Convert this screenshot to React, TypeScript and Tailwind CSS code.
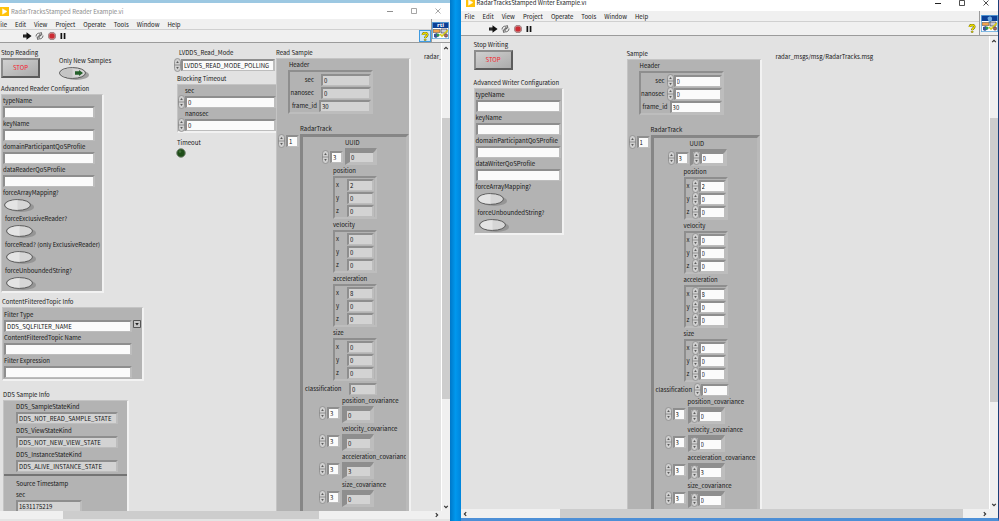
import { useState } from "react";
import type { ReactNode } from "react";
import clsx from "clsx";

type Vector = { name: string; values: [string, string, string] };

const VECTORS: Vector[] = [
  { name: "position", values: ["2", "0", "0"] },
  { name: "velocity", values: ["0", "0", "0"] },
  { name: "acceleration", values: ["8", "0", "0"] },
  { name: "size", values: ["0", "0", "0"] },
];

const COVARIANCES = [
  { name: "position_covariance", value: "0" },
  { name: "velocity_covariance", value: "0" },
  { name: "acceleration_covariance", value: "3" },
  { name: "size_covariance", value: "0" },
];

const MENU = ["File", "Edit", "View", "Project", "Operate", "Tools", "Window", "Help"];

const RAISED = "border-t-[#c4c4c4] border-l-[#c4c4c4] border-r-[#f2f2f2] border-b-[#f2f2f2]";
const SUNKEN = "border-t-[#8e8e8e] border-l-[#8e8e8e] border-r-[#bdbdbd] border-b-[#bdbdbd]";

function Spinner() {
  return (
    <svg viewBox="0 0 7 14" className="h-[14px] w-[7px] shrink-0" aria-hidden="true">
      <rect x="0.5" y="0.5" width="6" height="13" rx="3" fill="#cfcfcf" stroke="#8a8a8a" strokeWidth="0.8" />
      <path d="M0.5 7h6" stroke="#777" strokeWidth="0.7" />
      <path d="M2.2 5l1.3-2 1.3 2zM2.2 9l1.3 2 1.3-2z" fill="#5a5a5a" />
    </svg>
  );
}

type ValueProps = { label: string; value?: string; editable?: boolean; className?: string };

function Value({ label, value = "", editable = true, className }: ValueProps) {
  return (
    <input
      aria-label={label}
      defaultValue={value}
      readOnly={!editable}
      className={clsx(
        "min-w-0 border-2 border-b-1 pl-px text-[6px] leading-[8px] outline-none",
        SUNKEN,
        editable ? "bg-[#fbfbfb]" : "bg-[#d3d3d3]",
        className,
      )}
    />
  );
}

function Field({ label, value, editable, className }: ValueProps) {
  return (
    <label className="block">
      <span className="block">{label}</span>
      <Value label={label} value={value} editable={editable} className={clsx("block h-[12px]", className)} />
    </label>
  );
}

function Toggle({ label, lit, className }: { label: string; lit?: boolean; className?: string }) {
  return (
    <label className={clsx("block", className)}>
      <span className="block">{label}</span>
      <input type="checkbox" className="peer sr-only" />
      <svg viewBox="0 0 30 15" className={clsx("block h-[15px] w-[30px]", !lit && "ml-px")} aria-hidden="true">
        <ellipse cx="17" cy="9" rx="13" ry="5" fill="#8b8b8b" opacity="0.75" />
        <ellipse cx="13.5" cy="7" rx="13" ry="5.4" fill="#d6d6d6" stroke="#5a5a5a" />
        <path d="M13.5 2.2c-7 0-11.7 2.2-11.7 4.8s4.7 4.7 11.7 4.7z" fill={lit ? "#c4c4c4" : "#e4e4e4"} />
        {lit && <path d="M16 5.2h4V4l4 3-4 3V8.8h-4z" fill="#24602a" />}
      </svg>
    </label>
  );
}

function StopButton() {
  return (
    <button
      type="button"
      className="block h-[20px] w-[39px] border-2 border-t-[#8d8d8d] border-r-[#5c5c5c] border-b-[#5c5c5c] border-l-[#8d8d8d] bg-linear-to-br from-[#d0d0d0] to-[#ababab] text-[6px] leading-[14px] text-[#f5222d]"
    >
      STOP
    </button>
  );
}

function Cluster({ className, children }: { className?: string; children: ReactNode }) {
  return <div className={clsx("border bg-[#b3b3b3]", RAISED, className)}>{children}</div>;
}

function ArrayIndex({ label, value, className }: { label: string; value: string; className?: string }) {
  return (
    <div className={clsx("flex w-[21px] shrink-0 items-center gap-px", className)}>
      <Spinner />
      <Value label={`${label} index`} value={value} className="h-[12px] w-[13px]" />
    </div>
  );
}

function ArrayElement({ label, value, editable }: ValueProps) {
  return (
    <div
      className={clsx(
        "flex h-[17px] items-center border-[3px] border-r-2 border-b-2",
        SUNKEN,
        editable ? "w-[37px]" : "w-[32px]",
      )}
    >
      {editable && <Spinner />}
      <Value label={label} value={value} editable={editable} className="h-[12px] flex-1" />
    </div>
  );
}

function HeaderRow({ label, value, editable, stepped }: ValueProps & { stepped: boolean }) {
  return (
    <div className="flex h-[13px] items-center">
      <span className={clsx("text-right", stepped ? "w-[24px]" : "w-[27px]")}>{label}</span>
      <div className={clsx("flex min-w-0 flex-1 items-center", stepped ? (editable ? "pl-[2px]" : "pl-[7px]") : "pl-[2px]")}>
        {editable && stepped && <Spinner />}
        <Value label={label} value={value} editable={editable} className="h-[12px] flex-1" />
      </div>
    </div>
  );
}

function VectorCluster({ vector, editable }: { vector: Vector; editable: boolean }) {
  return (
    <div className="ml-[30px]">
      <span className="block">{vector.name}</span>
      <div className={clsx("w-[44px] border-2", SUNKEN)}>
        {["x", "y", "z"].map((axis, i) => (
          <div key={axis} className="flex h-[13px] items-center pl-px">
            <span className={editable ? "w-[5px]" : "w-[11px]"}>{axis}</span>
            {editable && <Spinner />}
            <Value
              label={`${vector.name} ${axis}`}
              value={vector.values[i]}
              editable={editable}
              className="h-[12px] w-[27px]"
            />
          </div>
        ))}
      </div>
    </div>
  );
}

// Stamped radar message, shown as controls in the writer and indicators in the reader
function RadarSample({ title, editable }: { title: string; editable: boolean }) {
  return (
    <section className="flex w-[135px] shrink-0 flex-col">
      <h2>{title}</h2>
      <Cluster className="flex min-h-0 flex-1 flex-col border-r-2 border-b-0">
        <span className="ml-[12px]">Header</span>
        <div className={clsx("ml-[11px] w-[85px] border-2 pt-px", SUNKEN)}>
          <HeaderRow label="sec" value="0" editable={editable} stepped />
          <HeaderRow label="nanosec" value="0" editable={editable} stepped />
          <HeaderRow label="frame_id" value="30" editable={editable} stepped={false} />
        </div>
        <span className="mt-[9px] ml-[23px]">RadarTrack</span>
        <div className="flex min-h-0 flex-1">
          <ArrayIndex label="RadarTrack" value="1" className="ml-px self-start" />
          <div className="ml-px min-w-0 flex-1 overflow-hidden border-t-[3px] border-r-[3px] border-l-[3px] border-t-[#868686] border-r-[#bababa] border-l-[#868686]">
            <span className={clsx("block", editable ? "ml-[36px]" : "ml-[42px]")}>UUID</span>
            <div className={clsx("flex h-[17px] items-center", editable ? "ml-[14px] gap-px" : "ml-[19px] gap-[2px]")}>
              <ArrayIndex label="UUID" value="3" />
              <ArrayElement label="UUID" value="0" editable={editable} />
            </div>
            {VECTORS.map((vector) => (
              <VectorCluster key={vector.name} vector={vector} editable={editable} />
            ))}
            <div className="mt-px ml-[2px] flex h-[13px] items-center">
              <span className={editable ? "w-[38px]" : "w-[44px]"}>classification</span>
              {editable && <Spinner />}
              <Value label="classification" value="0" editable={editable} className="h-[12px] w-[28px]" />
            </div>
            {COVARIANCES.map(({ name, value }) => (
              <div key={name} className={editable ? "ml-[11px]" : "ml-[16px]"}>
                <span className="ml-[23px] block whitespace-nowrap">{name}</span>
                <div className="flex h-[17px] items-start gap-[2px]">
                  <ArrayIndex label={name} value="3" />
                  <ArrayElement label={name} value={value} editable={editable} />
                </div>
              </div>
            ))}
          </div>
        </div>
      </Cluster>
    </section>
  );
}

function LabViewLogo() {
  return (
    <svg viewBox="0 0 9 9" className="size-[9px] shrink-0" aria-hidden="true">
      <rect width="9" height="9" fill="#ffc20a" />
      <path d="M2.5 1.8v5.4L7 4.5z" fill="#fff" stroke="#fff8dc" strokeWidth="0.5" />
    </svg>
  );
}

function WindowButtons({ muted }: { muted: boolean }) {
  const stroke = muted ? "#8f8f8f" : "#222";
  return (
    <div className="ml-auto flex gap-[18px] pr-[9px]">
      <button type="button" aria-label="Minimize">
        <svg viewBox="0 0 6 6" className="size-[6px]"><path d="M0 3.5h6" stroke={stroke} /></svg>
      </button>
      <button type="button" aria-label="Maximize">
        <svg viewBox="0 0 6 6" className="size-[6px]"><path d="M.5.5h5v5h-5z" fill="none" stroke={stroke} strokeWidth="0.8" /></svg>
      </button>
      <button type="button" aria-label="Close">
        <svg viewBox="0 0 6 6" className="size-[6px]"><path d="M.5.5l5 5m0-5l-5 5" stroke={stroke} strokeWidth="0.8" /></svg>
      </button>
    </div>
  );
}

function RunTools() {
  return (
    <div className="flex items-center">
      <button type="button" aria-label="Run">
        <svg viewBox="0 0 9 8" className="h-[8px] w-[9px]">
          <path d="M0 2.5h3.5V.2L8.6 4 3.5 7.8V5.5H0z" fill="#111" />
          <path d="M.5 4h3" stroke="#777" strokeWidth="0.6" />
        </svg>
      </button>
      <button type="button" aria-label="Run continuously" className="ml-[3px]">
        <svg viewBox="0 0 9 8" className="h-[8px] w-[9px]" fill="none" stroke="#444" strokeWidth="0.8">
          <path d="M1 4.5C1 2 3 .8 5.2 1.2L6.3.3l.6 2.6-2.6.3.8-1M8 3.5C8 6 6 7.2 3.8 6.8l-1.1.9-.6-2.6 2.6-.3-.8 1" />
          <path d="M3 4.2l3-.6" />
        </svg>
      </button>
      <button type="button" aria-label="Abort execution" className="ml-[4px]">
        <svg viewBox="0 0 8 8" className="size-[8px]">
          <path d="M2.4.3h3.2l2.1 2.1v3.2L5.6 7.7H2.4L.3 5.6V2.4z" fill="#c9a0a0" stroke="#77595a" strokeWidth="0.6" />
          <path d="M2.6 1.6h2.8l1.2 1.2v2.6L5.4 6.4H2.6L1.4 5.4V2.8z" fill="#cc2c33" />
        </svg>
      </button>
      <button type="button" aria-label="Pause" className="ml-[4px]">
        <svg viewBox="0 0 6 6" className="size-[6px]"><path d="M.5 0h1.7v6H.5zM3.7 0h1.7v6H3.7z" fill="#111" /></svg>
      </button>
    </div>
  );
}

function HelpIcon() {
  return (
    <svg viewBox="0 0 8 9" className="h-[9px] w-[8px]" aria-hidden="true">
      <path d="M1.8 3C1.8.3 6.3.4 6.3 2.8 6.3 4.4 4.3 4.3 4.2 6" fill="none" stroke="#55500a" strokeWidth="2.4" />
      <path d="M1.8 3C1.8.3 6.3.4 6.3 2.8 6.3 4.4 4.3 4.3 4.2 6" fill="none" stroke="#f4e500" strokeWidth="1.4" />
      <circle cx="4.2" cy="7.8" r="1" fill="#f4e500" stroke="#55500a" strokeWidth="0.5" />
    </svg>
  );
}

function ViIcon({ writer }: { writer: boolean }) {
  return (
    <svg viewBox="0 0 17 17" className="size-[17px]" aria-hidden="true">
      <rect width="17" height="17" fill="#fff" />
      <rect width="17" height="6" fill="#0b3f96" />
      {writer ? (
        <path d="M6.5 3c1-2 4-2 4.5 0s-1 3-1 5H8c0-2-1.5-3-1.5-5z" fill="#6ea9dd" />
      ) : (
        <text x="8.5" y="5" textAnchor="middle" fontSize="6" fontFamily="Open Sans, sans-serif" fontWeight="700" fill="#fff">rti</text>
      )}
      <path d="M1 7.5h7v3H1z" fill="#f2a24d" stroke="#444" strokeWidth="0.5" />
      <path d="M9 7h6v4H9z" fill="#c9c9d6" stroke="#333" strokeWidth="0.6" />
      <path d="M2 12l3-1 2 3-3 2-2-1z" fill="#3b4f9a" />
      <path d="M8 12l2 2 6-6" fill="none" stroke="#d8cc16" strokeWidth="1.6" />
      <circle cx="6" cy="13" r="1.6" fill="#2e9b4a" />
      <circle cx="14" cy="13.5" r="1.7" fill="#a66" stroke="#333" strokeWidth="0.5" />
      <rect x="0.4" y="0.4" width="16.2" height="16.2" fill="none" stroke="#5fa8dc" strokeWidth="0.8" />
    </svg>
  );
}

function Chevron({ className }: { className?: string }) {
  return (
    <svg viewBox="0 0 8 8" className={clsx("size-[8px] shrink-0", className)} aria-hidden="true">
      <path d="M2.2 5.2L4 3.4l1.8 1.8" fill="none" stroke="#333" strokeWidth="1.2" />
    </svg>
  );
}

type WindowProps = {
  title: string;
  writer?: boolean;
  className?: string;
  horizontal: ReactNode;
  children: ReactNode;
};

function ViWindow({ title, writer = false, className, horizontal, children }: WindowProps) {
  return (
    <section className={clsx("flex min-w-0 flex-col overflow-hidden bg-[#f0f0f0]", className)}>
      <header
        className={clsx(
          "flex shrink-0 items-center bg-white",
          writer ? "h-[11px] pb-[6px] pl-[5px] text-[#222]" : "h-[16px] text-[#8b8b8b]",
        )}
      >
        <LabViewLogo />
        <h1 className="ml-[2px] whitespace-nowrap">{title}</h1>
        <WindowButtons muted={!writer} />
      </header>
      <div className={clsx("flex shrink-0 border-b border-[#9b9b9b]", writer ? "h-[25px]" : "h-[24px]")}>
        <div className="flex min-w-0 flex-1 flex-col">
          <nav className={clsx("flex h-[11px] shrink-0 items-center gap-[8px] border-b border-[#d0d0d0]", writer && "pl-[4px]")}>
            {MENU.map((item) => (
              <button key={item} type="button" className={clsx(item === "File" && !writer && "-ml-[3px]")}>
                {item}
              </button>
            ))}
          </nav>
          <div className={clsx("flex flex-1 items-center", writer ? "pl-[28px]" : "pl-[23px]")}>
            <RunTools />
            <button
              type="button"
              aria-label="Context help"
              className={clsx("ml-auto flex h-[12px] w-[12px] items-center justify-center", writer ? "mr-px" : "border border-[#3f9be0] bg-[#cfe6f7]")}
            >
              <HelpIcon />
            </button>
          </div>
        </div>
        <div className="flex w-[19px] items-end justify-center border-l border-[#9b9b9b] pb-[3px]">
          <ViIcon writer={writer} />
        </div>
      </div>
      <div className="flex min-h-0 flex-1">
        <main className="flex min-w-0 flex-1 overflow-hidden bg-[#e2e2e2]">{children}</main>
        <div className="flex w-[9px] shrink-0 flex-col items-center border-l border-white bg-[#f0f0f0]">
          <Chevron className="mt-px" />
          <div className={clsx("h-[60%] w-full bg-[#cdcdcd]", writer ? "mt-[73px]" : "mt-[66px]")} />
          <Chevron className="mt-auto rotate-180" />
        </div>
      </div>
      {horizontal}
    </section>
  );
}

function ReaderPanel() {
  const [filter, setFilter] = useState("DDS_SQLFILTER_NAME");

  return (
    <>
      <div className="flex w-[174px] shrink-0 flex-col pt-[4px] pl-px">
        <div className="flex">
          <div className="w-[58px]">
            <span className="block">Stop Reading</span>
            <StopButton />
          </div>
          <div className="pt-[8px]">
            <Toggle label="Only New Samples" lit />
          </div>
        </div>
        <h2 className="mt-[2px]">Advanced Reader Configuration</h2>
        <Cluster className="w-[103px] border-r-2 border-b-2 pl-px">
          <Field label="typeName" className="w-[92px]" />
          <Field label="keyName" className="w-[92px]" />
          <Field label="domainParticipantQoSProfile" className="w-[92px]" />
          <Field label="dataReaderQoSProfile" className="w-[92px]" />
          <Toggle label="forceArrayMapping?" />
          <Toggle label="forceExclusiveReader?" className="pl-[2px]" />
          <Toggle label="forceRead? (only ExclusiveReader)" className="pl-[2px] whitespace-nowrap" />
          <Toggle label="forceUnboundedString?" className="pl-[2px]" />
        </Cluster>
        <h2 className="mt-[3px] ml-px">ContentFilteredTopic Info</h2>
        <Cluster className="ml-px w-[142px] border-r-2 border-b-2 py-px pl-px">
          <label className="block">
            <span className="block">Filter Type</span>
            <span className="flex items-start">
              <select
                value={filter}
                onChange={(e) => setFilter(e.target.value)}
                className={clsx("h-[12px] w-[128px] appearance-none border-2 border-b-1 bg-[#fbfbfb] pl-px leading-[9px]", SUNKEN)}
              >
                <option>DDS_SQLFILTER_NAME</option>
                <option>DDS_STRINGMATCHFILTER_NAME</option>
              </select>
              <svg viewBox="0 0 8 8" className="ml-px size-[8px]" aria-hidden="true">
                <path d="M.5.5h7v7h-7z" fill="#c6c6c6" stroke="#555" />
                <path d="M2.2 3h3.6L4 5.5z" fill="#222" />
              </svg>
            </span>
          </label>
          <Field label="ContentFilteredTopic Name" className="w-[128px]" />
          <Field label="Filter Expression" className="w-[128px]" />
        </Cluster>
        <h2 className="mt-[8px] ml-[2px]">DDS Sample Info</h2>
        <Cluster className="ml-[2px] min-h-0 w-[126px] flex-1 overflow-hidden border-r-2 border-b-0">
          <div className="flex flex-col gap-px pl-[12px]">
            <Field label="DDS_SampleStateKind" value="DDS_NOT_READ_SAMPLE_STATE" editable={false} className="w-[102px]" />
            <Field label="DDS_ViewStateKind" value="DDS_NOT_NEW_VIEW_STATE" editable={false} className="w-[102px]" />
            <Field label="DDS_InstanceStateKind" value="DDS_ALIVE_INSTANCE_STATE" editable={false} className="w-[102px]" />
          </div>
          <hr className="mt-[2px] border-t-2 border-[#747474]" />
          <div className="pl-[12px]">
            <span className="block pt-[2px]">Source Timestamp</span>
            <Field label="sec" value="1631175219" editable={false} className="w-[66px]" />
          </div>
        </Cluster>
      </div>

      <div className="w-[102px] shrink-0 pt-[4px]">
        <label className="block">
          <span className="block pl-[5px]">LVDDS_Read_Mode</span>
          <span className="flex h-[13px] items-center">
            <Spinner />
            <Value label="LVDDS_Read_Mode" value="LVDDS_READ_MODE_POLLING" className="h-[12px] w-[94px]" />
          </span>
        </label>
        <h2 className="mt-[2px] pl-[3px]">Blocking Timeout</h2>
        <Cluster className="ml-[3px] border-r-0 border-b-2">
          {["sec", "nanosec"].map((unit) => (
            <label key={unit} className="block">
              <span className="block pl-[7px]">{unit}</span>
              <span className="flex h-[12px] items-center">
                <Spinner />
                <Value label={unit} value="0" className="h-[12px] flex-1" />
              </span>
            </label>
          ))}
        </Cluster>
        <span className="mt-[4px] block pl-[3px]">Timeout</span>
        <svg viewBox="0 0 10 10" className="ml-[2px] size-[10px]" aria-hidden="true">
          <circle cx="5" cy="5" r="4.3" fill="#1e4d18" stroke="#7d8a7b" />
          <circle cx="4" cy="3.6" r="1.3" fill="#3d6e36" />
        </svg>
      </div>

      <div className="flex shrink-0 pt-[4px]">
        <RadarSample title="Read Sample" editable={false} />
      </div>
      <span className="min-w-0 overflow-hidden pt-[8px] pl-[13px]">radar_</span>
    </>
  );
}

function WriterPanel() {
  return (
    <>
      <div className="w-[166px] shrink-0 pt-[3px] pl-[13px]">
        <span className="block">Stop Writing</span>
        <StopButton />
        <h2 className="mt-[7px]">Advanced Writer Configuration</h2>
        <Cluster className="w-[90px] border-r-2 border-b-2 pl-px">
          <Field label="typeName" className="w-[85px]" />
          <Field label="keyName" className="w-[85px]" />
          <Field label="domainParticipantQoSProfile" className="w-[85px]" />
          <Field label="dataWriterQoSProfile" className="w-[85px]" />
          <Toggle label="forceArrayMapping?" />
          <Toggle label="forceUnboundedString?" className="pl-[2px]" />
        </Cluster>
      </div>
      <div className="flex shrink-0 pt-[12px]">
        <RadarSample title="Sample" editable />
      </div>
      <span className="pt-[15px] pl-[14px]">radar_msgs/msg/RadarTracks.msg</span>
    </>
  );
}

export default function App() {
  return (
    <div className="flex h-screen overflow-hidden bg-[#0095e9] font-['Noto_Sans_CJK_SC','Open_Sans',sans-serif] text-[6px] leading-[11px] text-[#151515]">
      <ViWindow
        title="RadarTracksStamped Reader Example.vi"
        className="flex-[450] border-t-[3px] border-b-2 border-t-[#9cc8e2] border-b-[#e4e4e4]"
        horizontal={
          <div className="flex h-[8px] shrink-0 items-center">
            <div className="h-full w-[14%] bg-[#f0f0f0]" />
            <div className="h-full w-[57%] bg-[#cdcdcd]" />
            <Chevron className="mr-[9px] ml-auto rotate-90" />
          </div>
        }
      >
        <ReaderPanel />
      </ViWindow>
      <div className="w-[11px] shrink-0 bg-linear-to-r from-[#0078c8] via-[#0098ee] to-[#0085dc]" />
      <ViWindow
        title="RadarTracksStamped Writer Example.vi"
        writer
        className="flex-[538] border-r border-b-[3px] border-r-[#1b3f78] border-b-[#4d8fd6]"
        horizontal={
          <div className="flex h-[9px] shrink-0 items-center">
            <Chevron className="-rotate-90" />
            <div className="ml-[17%] h-full w-[75%] bg-[#cdcdcd]" />
            <Chevron className="mr-[9px] ml-auto rotate-90" />
          </div>
        }
      >
        <WriterPanel />
      </ViWindow>
    </div>
  );
}
